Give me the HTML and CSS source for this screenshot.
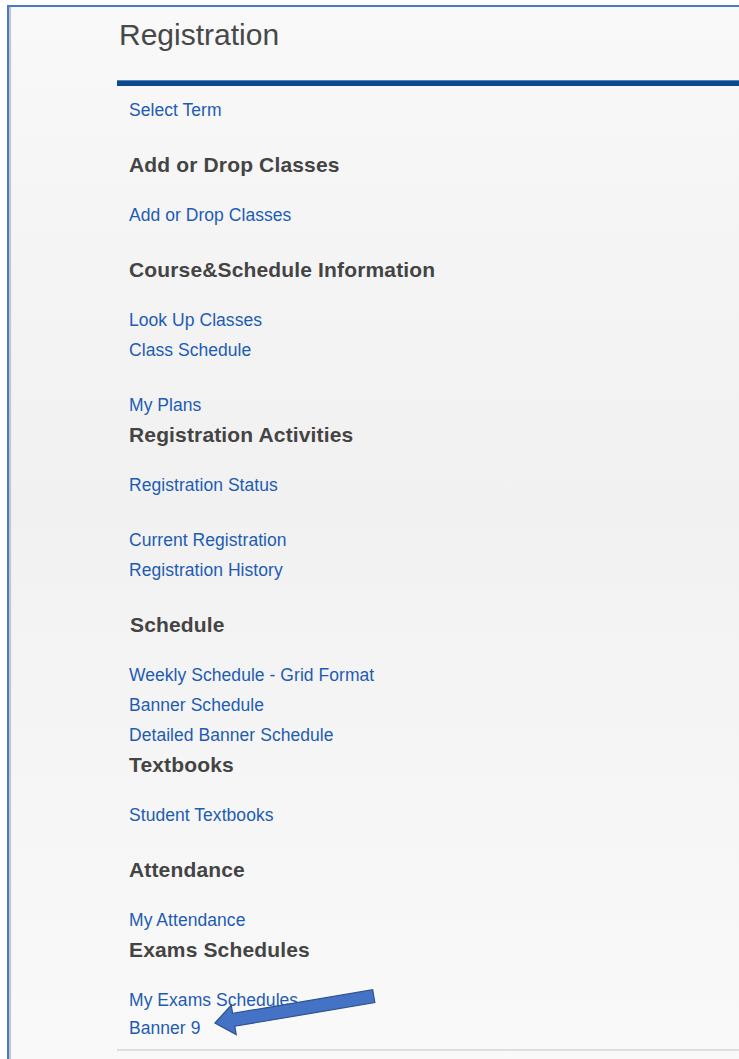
FILE: index.html
```html
<!DOCTYPE html>
<html lang="en">
<head>
<meta charset="utf-8">
<title>Registration</title>
<link rel="stylesheet" href="styles.css">
</head>
<body>
<div class="frame">
  <main class="panel">
    <h1 class="title">Registration</h1>
    <div class="rule"></div>
    <nav class="menu">
      <a class="link" href="#">Select Term</a>
      <h2 class="head gap">Add or Drop Classes</h2>
      <a class="link" href="#">Add or Drop Classes</a>
      <h2 class="head gap">Course&amp;Schedule Information</h2>
      <a class="link" href="#">Look Up Classes</a>
      <a class="link" href="#">Class Schedule</a>
      <a class="link gap" href="#">My Plans</a>
      <h2 class="head">Registration Activities</h2>
      <a class="link" href="#">Registration Status</a>
      <a class="link gap" href="#">Current Registration</a>
      <a class="link" href="#">Registration History</a>
      <h2 class="head gap nudge">Schedule</h2>
      <a class="link" href="#">Weekly Schedule - Grid Format</a>
      <a class="link" href="#">Banner Schedule</a>
      <a class="link" href="#">Detailed Banner Schedule</a>
      <h2 class="head">Textbooks</h2>
      <a class="link" href="#">Student Textbooks</a>
      <h2 class="head gap">Attendance</h2>
      <a class="link" href="#">My Attendance</a>
      <h2 class="head">Exams Schedules</h2>
      <a class="link" href="#">My Exams Schedules</a>
      <a class="link short" href="#">Banner 9</a>
    </nav>
    <div class="foot-rule"></div>
  </main>
  <!-- callout arrow pointing at the Banner 9 link -->
  <svg class="pointer" width="180" height="60" viewBox="0 0 180 60">
    <polygon transform="translate(10 43) rotate(-9.6)"
             points="0,0 19,-15 19,-6.5 161,-6.5 161,6.5 19,6.5 19,15"
             fill="#4472c4" stroke="#2f528f" stroke-width="1.2" stroke-linejoin="miter"/>
  </svg>
</div>
</body>
</html>
```

FILE: styles.css
```css
html, body {
  margin: 0;
  padding: 0;
  background: #ffffff;
}

body {
  font-family: "Liberation Sans", Arial, sans-serif;
  width: 739px;
  height: 1059px;
  overflow: hidden;
}

.frame {
  position: relative;
  margin: 5px 0 0 7px;
  height: 1054px;
  border-top: 2px solid #4a78cc;
  border-left: 2px solid #4a78cc;
  background: linear-gradient(180deg, #f9f9f9 0%, #f3f3f3 30%, #f1f1f1 48%, #f6f6f6 75%, #f9f9f9 100%);
  box-shadow: inset 3px 0 1px -1px #c4c4c4;
}

.panel {
  padding: 10px 0 0 108px;
}

.title {
  margin: 0 0 0 2px;
  font-size: 30px;
  line-height: 36px;
  font-weight: normal;
  color: #484848;
}

.rule {
  margin-top: 27px;
  height: 6px;
  background: #0a4a8e;
  border-top: 1px solid #5a82b4;
  box-sizing: border-box;
}

.menu {
  display: flex;
  flex-direction: column;
  align-items: flex-start;
  padding: 9px 0 0 12px;
}

.link {
  display: block;
  height: 30px;
  line-height: 30px;
  font-size: 17.5px;
  letter-spacing: 0.05px;
  color: #1e5cb3;
  text-decoration: none;
}

.head {
  margin: 0 0 20px 0;
  height: 30px;
  line-height: 30px;
  font-size: 21px;
  letter-spacing: 0.15px;
  font-weight: bold;
  color: #444444;
}

.gap {
  margin-top: 25px;
}

.nudge {
  padding-left: 1px;
}

.short {
  height: 28px;
  line-height: 26px;
}

.foot-rule {
  margin-top: 6px;
  height: 2px;
  background: #dedede;
}

.pointer {
  position: absolute;
  left: 196px;
  top: 973px;
}
```
